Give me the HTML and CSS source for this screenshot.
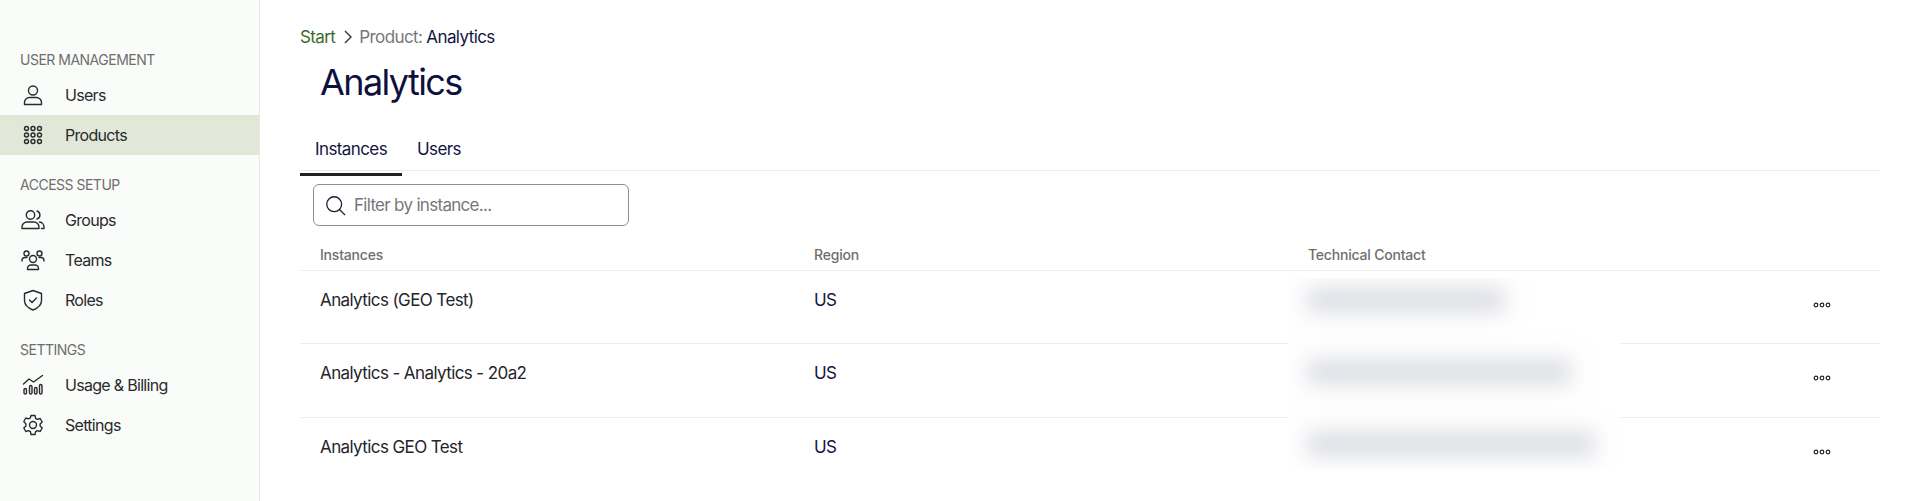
FILE: index.html
```html
<!DOCTYPE html>
<html lang="en">
<head>
    <meta charset="UTF-8">
    <meta name="viewport" content="width=device-width, initial-scale=1.0">
    <title>Product: Analytics</title>
    <link rel="stylesheet" href="styles.css">
</head>
<body>
    <aside class="sidebar">
        <div class="nav-group">
            <div class="nav-label">USER MANAGEMENT</div>
            <a class="nav-item">
                <svg class="nav-icon" viewBox="0 0 24 24"><circle cx="12" cy="7.500" r="4.500"/><path d="M3.500 21.500v-2a5 5 0 0 1 5-5h7a5 5 0 0 1 5 5v2z"/></svg>
                <span>Users</span>
            </a>
            <a class="nav-item active">
                <svg class="nav-icon" viewBox="0 0 24 24"><rect x="3.500" y="3.500" width="4" height="4" rx="2"/><rect x="10" y="3.500" width="4" height="4" rx="2"/><rect x="16.500" y="3.500" width="4" height="4" rx="2"/><rect x="3.500" y="10" width="4" height="4" rx="2"/><rect x="10" y="10" width="4" height="4" rx="2"/><rect x="16.500" y="10" width="4" height="4" rx="2"/><rect x="3.500" y="16.500" width="4" height="4" rx="2"/><rect x="10" y="16.500" width="4" height="4" rx="2"/><rect x="16.500" y="16.500" width="4" height="4" rx="2"/></svg>
                <span>Products</span>
            </a>
        </div>
        <div class="nav-group">
            <div class="nav-label">ACCESS SETUP</div>
            <a class="nav-item">
                <svg class="nav-icon" viewBox="0 0 24 24"><circle cx="9.500" cy="7" r="4.200"/><path d="M1 20.500v-1.500a5 5 0 0 1 5-5h7a5 5 0 0 1 5 5v1.500z"/><path d="M16 3a4.200 4.200 0 0 1 0 8"/><path d="M18.500 14a5 5 0 0 1 4.500 5v1.500h-2.500"/></svg>
                <span>Groups</span>
            </a>
            <a class="nav-item">
                <svg class="nav-icon" viewBox="0 0 24 24"><circle cx="12" cy="11" r="3.500"/><path d="M6.500 21.500v-1a3.500 3.500 0 0 1 3.500-3.500h4a3.500 3.500 0 0 1 3.500 3.500v1z"/><circle cx="5.500" cy="5.500" r="2.500"/><circle cx="18.500" cy="5.500" r="2.500"/><path d="M1 13v-.5a3 3 0 0 1 3-3h2"/><path d="M23 13v-.5a3 3 0 0 0-3-3h-2"/></svg>
                <span>Teams</span>
            </a>
            <a class="nav-item">
                <svg class="nav-icon" viewBox="0 0 24 24"><path d="M12 2.500l8.500 3v7c0 4.500-3.500 7.500-8.500 9.500-5-2-8.500-5-8.500-9.500v-7z"/><path d="M8.500 12l2.500 2.500 4.500-4.500"/></svg>
                <span>Roles</span>
            </a>
        </div>
        <div class="nav-group">
            <div class="nav-label">SETTINGS</div>
            <a class="nav-item">
                <svg class="nav-icon" viewBox="0 0 24 24"><path d="M2.500 11l5.500-5 4.500 3 9-6.500"/><rect x="3" y="15.500" width="2.500" height="5.500" rx="1.250"/><rect x="8.500" y="12.500" width="2.500" height="8.500" rx="1.250"/><rect x="13.500" y="14.500" width="2.500" height="6.500" rx="1.250"/><rect x="18.500" y="11.500" width="2.500" height="9.500" rx="1.250"/></svg>
                <span>Usage &amp; Billing</span>
            </a>
            <a class="nav-item">
                <svg class="nav-icon" viewBox="0 0 24 24"><circle cx="12" cy="12" r="3.500"/><path d="M10 2.500h4l.6 2.800 1.900 1.100 2.700-.9 2 3.500-2.100 1.900v2.200l2.100 1.900-2 3.500-2.700-.9-1.900 1.100-.6 2.800h-4l-.6-2.800-1.900-1.100-2.700.9-2-3.500 2.100-1.900v-2.200L2.800 8.500l2-3.500 2.700.9 1.900-1.100z"/></svg>
                <span>Settings</span>
            </a>
        </div>
    </aside>

    <main class="content">
        <nav class="breadcrumb">
            <a class="crumb-start">Start</a>
            <svg class="crumb-sep" viewBox="0 0 12 16"><path d="M3 2l6 6-6 6"/></svg>
            <span class="crumb-label">Product:</span>
            <span class="crumb-current">Analytics</span>
        </nav>
        <h1 class="title">Analytics</h1>

        <div class="tabs">
            <a class="tab active">Instances</a>
            <a class="tab">Users</a>
        </div>

        <div class="filter">
            <svg class="filter-icon" viewBox="0 0 24 24"><circle cx="10.500" cy="10.500" r="8.500"/><path d="M16.500 16.500l6.500 6.500"/></svg>
            <span class="filter-text">Filter by instance...</span>
        </div>

        <div class="table">
            <div class="row head">
                <div>Instances</div>
                <div>Region</div>
                <div>Technical Contact</div>
            </div>
            <div class="row">
                <div class="name">Analytics (GEO Test)</div>
                <div class="region">US</div>
                <div></div>
                <svg class="more" viewBox="0 0 18 6"><circle cx="3" cy="3" r="1.800"/><circle cx="9" cy="3" r="1.800"/><circle cx="15" cy="3" r="1.800"/></svg>
            </div>
            <div class="row">
                <div class="name">Analytics - Analytics - 20a2</div>
                <div class="region">US</div>
                <div></div>
                <svg class="more" viewBox="0 0 18 6"><circle cx="3" cy="3" r="1.800"/><circle cx="9" cy="3" r="1.800"/><circle cx="15" cy="3" r="1.800"/></svg>
            </div>
            <div class="row last">
                <div class="name">Analytics GEO Test</div>
                <div class="region">US</div>
                <div></div>
                <svg class="more" viewBox="0 0 18 6"><circle cx="3" cy="3" r="1.800"/><circle cx="9" cy="3" r="1.800"/><circle cx="15" cy="3" r="1.800"/></svg>
            </div>
            <div class="redacted">
                <div class="smudge short"></div>
                <div class="smudge medium"></div>
                <div class="smudge long"></div>
            </div>
        </div>
    </main>
</body>
</html>
```

FILE: styles.css
```css
* {
    box-sizing: border-box;
    margin: 0;
    padding: 0;
}

body {
    font-family: 'Inter', 'Liberation Sans', sans-serif;
    display: flex;
    height: 100vh;
    overflow: hidden;
    background-color: #fff;
    color: #24242a;
}

.sidebar {
    width: 260px;
    flex-shrink: 0;
    padding-top: 50px;
    background-color: #fafcf9;
    border-right: 1px solid #e8e9e8;
}

.nav-group {
    margin-bottom: 20px;
}

.nav-label {
    height: 20px;
    margin-bottom: 5px;
    padding-left: 20px;
    font-size: 14px;
    line-height: 20px;
    letter-spacing: -0.5px;
    color: #6e6e6e;
}

.nav-item {
    display: flex;
    align-items: center;
    gap: 20px;
    height: 40px;
    padding-left: 21px;
    font-size: 16px;
    letter-spacing: -0.7px;
    color: #2a2a2e;
}

.nav-item.active {
    background-color: #e1e8d7;
}

.nav-icon {
    width: 24px;
    height: 24px;
    fill: none;
    stroke: #2a2a2e;
    stroke-width: 1.4;
    stroke-linejoin: round;
    stroke-linecap: round;
}

.content {
    flex: 1;
    padding: 26px 40px 0;
    min-width: 0;
}

.breadcrumb {
    display: flex;
    align-items: center;
    height: 22px;
    font-size: 17px;
    letter-spacing: -0.6px;
}

.crumb-start {
    color: #3c6a2c;
}

.crumb-sep {
    width: 12px;
    height: 16px;
    margin: 0 5px 0 7px;
    fill: none;
    stroke: #33333a;
    stroke-width: 1.4;
}

.crumb-label {
    color: #77777a;
    margin-right: 4px;
}

.crumb-current {
    color: #14143f;
}

.title {
    margin-top: 11px;
    padding-left: 20px;
    font-size: 36px;
    font-weight: 400;
    line-height: 46px;
    letter-spacing: -1.6px;
    color: #10103f;
}

.tabs {
    display: flex;
    height: 47px;
    margin-top: 19px;
    border-bottom: 1px solid #ececec;
}

.tab {
    height: 52px;
    padding: 15px 15px 0;
    font-size: 17px;
    letter-spacing: -0.6px;
    color: #14143f;
}

.tab.active {
    border-bottom: 3px solid #222;
}

.filter {
    display: flex;
    align-items: center;
    gap: 8px;
    width: 316px;
    height: 42px;
    margin: 13px 0 0 13px;
    padding-left: 11px;
    border: 1px solid #8e8e8e;
    border-radius: 6px;
}

.filter-icon {
    width: 21px;
    height: 21px;
    fill: none;
    stroke: #1c1c34;
    stroke-width: 1.500;
}

.filter-text {
    font-size: 17px;
    letter-spacing: -0.7px;
    color: #77777a;
}

.table {
    position: relative;
}

.row {
    display: grid;
    grid-template-columns: 494px 494px 494px 1fr;
    height: 73.4px;
    padding: 19px 0 0 20px;
    border-bottom: 1px solid #ececec;
    font-size: 17px;
    letter-spacing: -0.6px;
}

.row.last {
    border-bottom: none;
}

.row.head {
    height: 45px;
    padding-top: 20px;
    font-size: 14px;
    font-weight: 500;
    letter-spacing: -0.2px;
    color: #6e6e6e;
    border-bottom-color: #eeeee4;
}

.region {
    color: #14143f;
}

.more {
    width: 18px;
    height: 6px;
    margin: 12px 0 0 11px;
    fill: none;
    stroke: #222;
    stroke-width: 1.200;
}

/* contact column is blurred out in the source */
.redacted {
    position: absolute;
    top: 52px;
    left: 988px;
    width: 333px;
    height: 192px;
    padding: 11px 0 0 22px;
    background-color: #fff;
    overflow: hidden;
}

.smudge {
    height: 20px;
    margin: 1px 0 52px;
    background-color: #dfe0e6;
    box-shadow: 0 0 14px 6px rgba(223, 224, 230, 0.55);
    filter: blur(9px);
}

.smudge.short {
    width: 192px;
}

.smudge.medium {
    width: 258px;
}

.smudge.long {
    width: 282px;
}
```
